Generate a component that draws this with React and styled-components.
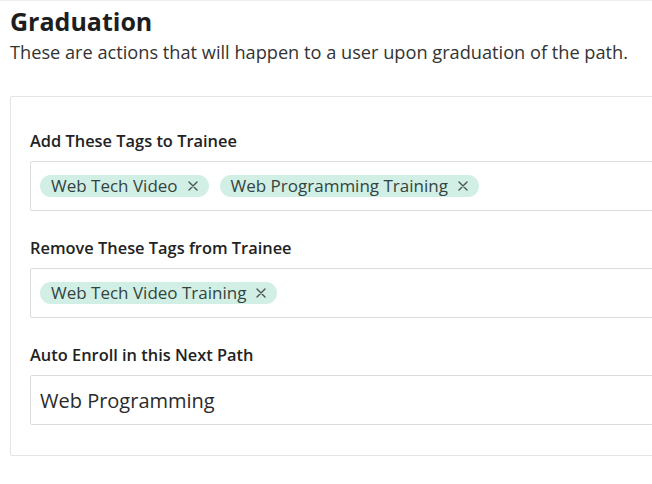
import React from 'react';
import styled, { createGlobalStyle } from 'styled-components';

const GlobalStyle = createGlobalStyle`
  html, body {
    margin: 0;
    padding: 0;
    background: #fff;
    overflow: hidden;
  }
  body {
    font-family: "Open Sans", "Noto Sans", sans-serif;
    color: #222;
  }
`;

const Page = styled.div`
  width: 652px;
  height: 484px;
  border-top: 1px solid #eeeeee;
  box-sizing: border-box;
  padding: 5px 0 0 10px;
  overflow: hidden;
`;

const Title = styled.h2`
  margin: 0;
  font-size: 25px;
  font-weight: 700;
  line-height: 30px;
  color: #1e1e1e;
`;

const Subtitle = styled.p`
  margin: 5px 0 0;
  font-size: 18.2px;
  line-height: 22px;
  color: #333;
  white-space: nowrap;
`;

const Card = styled.div`
  margin-top: 33px;
  width: 720px;
  border: 1px solid #e4e4e6;
  border-radius: 2px;
  padding: 34px 19px 30px;
  display: flex;
  flex-direction: column;
  gap: 27px;
`;

const Field = styled.div`
  display: flex;
  flex-direction: column;
  gap: 10px;
`;

const Label = styled.label`
  font-size: 16.4px;
  font-weight: 600;
  line-height: 20px;
  color: #222;
`;

const Box = styled.div`
  height: 50px;
  box-sizing: border-box;
  border: 1px solid #dcdce0;
  border-radius: 2px;
  display: flex;
  align-items: center;
  gap: 11px;
  padding: 0 9px;
  font-size: ${p => (p.$large ? '20px' : '17px')};
  color: #2b2b2b;
`;

const Chip = styled.span`
  display: inline-flex;
  align-items: center;
  height: 22px;
  padding: 0 11px;
  border-radius: 11px;
  background: #d2efe6;
  color: #33443f;
  font-size: 17px;
  line-height: 22px;
  white-space: nowrap;
`;

const Remove = styled.span`
  margin-left: 10px;
  display: inline-flex;
  color: #4a5552;
`;

const CrossIcon = () => (
  <svg width="10" height="10" viewBox="0 0 10 10">
    <path d="M1 1 L9 9 M9 1 L1 9" stroke="currentColor" strokeWidth="1.4" strokeLinecap="round" />
  </svg>
);

const Tag = ({ children }) => (
  <Chip>
    {children}
    <Remove>
      <CrossIcon />
    </Remove>
  </Chip>
);

export default function App() {
  return (
    <Page>
      <GlobalStyle />
      <Title>Graduation</Title>
      <Subtitle>These are actions that will happen to a user upon graduation of the path.</Subtitle>
      <Card>
        <Field>
          <Label>Add These Tags to Trainee</Label>
          <Box>
            <Tag>Web Tech Video</Tag>
            <Tag>Web Programming Training</Tag>
          </Box>
        </Field>
        <Field>
          <Label>Remove These Tags from Trainee</Label>
          <Box>
            <Tag>Web Tech Video Training</Tag>
          </Box>
        </Field>
        <Field>
          <Label>Auto Enroll in this Next Path</Label>
          <Box $large>Web Programming</Box>
        </Field>
      </Card>
    </Page>
  );
}
